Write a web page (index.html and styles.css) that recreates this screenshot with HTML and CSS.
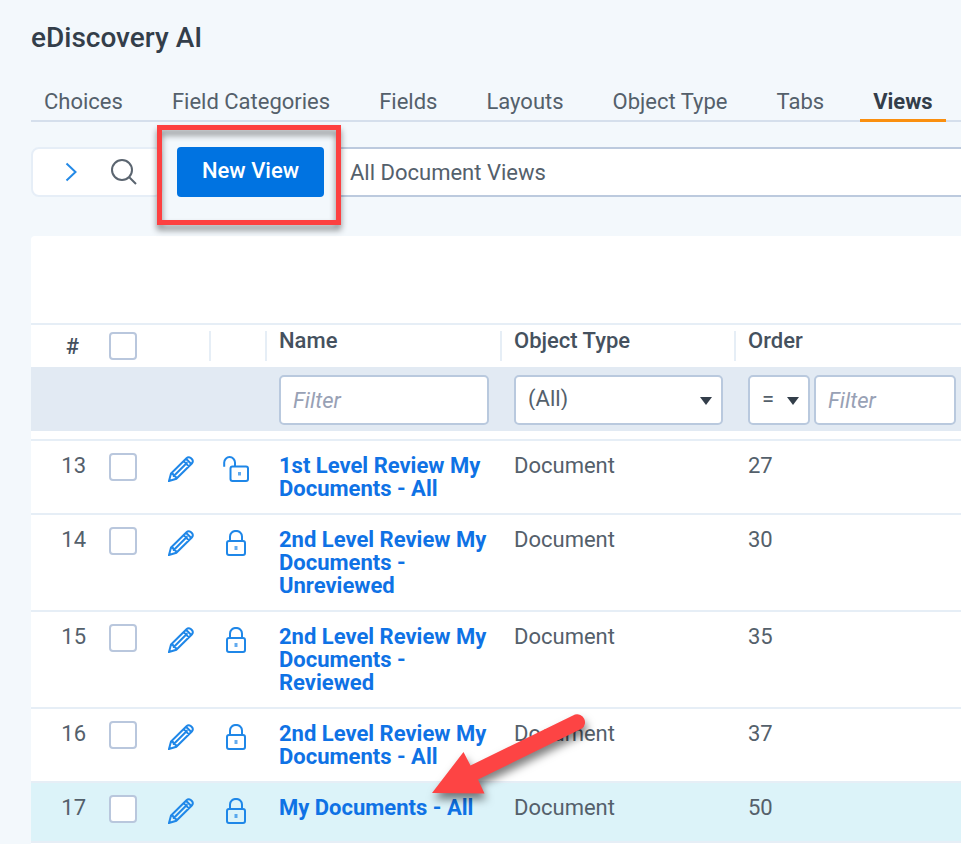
FILE: index.html
```html
<!DOCTYPE html>
<html lang="en">
<head>
  <meta charset="UTF-8">
  <meta name="viewport" content="width=device-width, initial-scale=1.0">
  <title>eDiscovery AI - Views</title>
  <link rel="stylesheet" href="styles.css">
</head>
<body>
  <!-- Shared icons -->
  <svg class="sprite" aria-hidden="true">
    <symbol id="icon-pencil" viewBox="0 0 26 26">
      <path d="M1 25 L3 17.5 L18.5 2.2 Q20.5 0.3 22.8 2 L24 3.2 Q25.7 5.4 23.8 7.5 L8.3 22.8 Z M3 17.5 Q5.5 17.3 5.8 20 Q8.5 20.2 8.3 22.8 M5.8 20 L19.5 6.3 M15.6 5.1 L20.9 10.4 M18 2.8 L23.3 8"/>
    </symbol>
    <symbol id="icon-lock" viewBox="0 0 26 26">
      <rect x="4" y="11" width="18" height="14" rx="2"/>
      <path d="M7 11 V6.5 A6 5.6 0 0 1 19 6.5 V11"/>
      <path class="keyhole" d="M13 16 V20"/>
    </symbol>
    <symbol id="icon-unlock" viewBox="0 0 26 26">
      <rect x="7.5" y="10.5" width="17.5" height="14.5" rx="2"/>
      <path d="M1.2 10.8 V6.5 A5.4 5.4 0 0 1 12 6.5 V10.5"/>
      <path class="keyhole" d="M16.5 16 V19.5"/>
    </symbol>
  </svg>

  <h1>eDiscovery AI</h1>

  <nav class="tabs">
    <a href="#choices">Choices</a>
    <a href="#field-categories">Field Categories</a>
    <a href="#fields">Fields</a>
    <a href="#layouts">Layouts</a>
    <a href="#object-type">Object Type</a>
    <a href="#tabs">Tabs</a>
    <a href="#views" class="active" aria-current="page">Views</a>
  </nav>

  <div class="toolbar">
    <div class="tools">
      <button type="button" class="tool" aria-label="Expand">
        <svg width="12" height="20" viewBox="0 0 12 20"><path class="chevron" d="M1.5 1.5 L10.5 10 L1.5 18.5"/></svg>
      </button>
      <button type="button" class="tool" aria-label="Search">
        <svg width="26" height="26" viewBox="0 0 26 26"><path class="glass" d="M18 18 L25 25 M21 11 A10 10 0 1 1 1 11 A10 10 0 1 1 21 11"/></svg>
      </button>
    </div>
    <div class="new-view">
      <button type="button">New View</button>
    </div>
    <select class="view-select" aria-label="View">
      <option>All Document Views</option>
    </select>
  </div>

  <main class="panel">
    <table>
      <colgroup>
        <col class="col-num">
        <col class="col-check">
        <col class="col-edit">
        <col class="col-lock">
        <col class="col-name">
        <col class="col-type">
        <col>
      </colgroup>
      <thead>
        <tr class="heads">
          <th class="num">#</th>
          <th><input type="checkbox" aria-label="Select all"></th>
          <th></th>
          <th><span class="divider"></span></th>
          <th><span class="divider">Name</span></th>
          <th><span class="divider">Object Type</span></th>
          <th><span class="divider">Order</span></th>
        </tr>
        <tr class="filters">
          <td colspan="4"></td>
          <td><input type="text" placeholder="Filter" aria-label="Filter by name"></td>
          <td>
            <div class="select">
              <select aria-label="Filter by object type"><option>(All)</option></select>
            </div>
          </td>
          <td class="order-filter">
            <div class="filter-group">
              <div class="select operator">
                <select aria-label="Order operator"><option>=</option></select>
              </div>
              <input type="text" placeholder="Filter" aria-label="Filter by order">
            </div>
          </td>
        </tr>
      </thead>
      <tbody>
        <tr>
          <td class="num">13</td>
          <td><input type="checkbox" aria-label="Select row 13"></td>
          <td><button type="button" class="icon" aria-label="Edit"><svg><use href="#icon-pencil"/></svg></button></td>
          <td><button type="button" class="icon" aria-label="Unlocked"><svg><use href="#icon-unlock"/></svg></button></td>
          <td><a href="#13">1st Level Review My Documents - All</a></td>
          <td>Document</td>
          <td>27</td>
        </tr>
        <tr>
          <td class="num">14</td>
          <td><input type="checkbox" aria-label="Select row 14"></td>
          <td><button type="button" class="icon" aria-label="Edit"><svg><use href="#icon-pencil"/></svg></button></td>
          <td><button type="button" class="icon" aria-label="Locked"><svg><use href="#icon-lock"/></svg></button></td>
          <td><a href="#14">2nd Level Review My Documents - Unreviewed</a></td>
          <td>Document</td>
          <td>30</td>
        </tr>
        <tr>
          <td class="num">15</td>
          <td><input type="checkbox" aria-label="Select row 15"></td>
          <td><button type="button" class="icon" aria-label="Edit"><svg><use href="#icon-pencil"/></svg></button></td>
          <td><button type="button" class="icon" aria-label="Locked"><svg><use href="#icon-lock"/></svg></button></td>
          <td><a href="#15">2nd Level Review My Documents - Reviewed</a></td>
          <td>Document</td>
          <td>35</td>
        </tr>
        <tr>
          <td class="num">16</td>
          <td><input type="checkbox" aria-label="Select row 16"></td>
          <td><button type="button" class="icon" aria-label="Edit"><svg><use href="#icon-pencil"/></svg></button></td>
          <td><button type="button" class="icon" aria-label="Locked"><svg><use href="#icon-lock"/></svg></button></td>
          <td><a href="#16">2nd Level Review My Documents - All</a></td>
          <td>Document</td>
          <td>37</td>
        </tr>
        <tr class="current">
          <td class="num">17</td>
          <td><input type="checkbox" aria-label="Select row 17"></td>
          <td><button type="button" class="icon" aria-label="Edit"><svg><use href="#icon-pencil"/></svg></button></td>
          <td><button type="button" class="icon" aria-label="Locked"><svg><use href="#icon-lock"/></svg></button></td>
          <td class="pointed">
            <a href="#17">My Documents - All</a>
            <svg class="arrow" width="170" height="105" viewBox="0 0 170 105" aria-hidden="true">
              <path d="M6 87 L37.500 46 L44.500 59.500 L149 8.500 A8 8 0 0 1 156 22.500 L52 73.500 L58.500 87.500 Z"/>
            </svg>
          </td>
          <td>Document</td>
          <td>50</td>
        </tr>
      </tbody>
    </table>
  </main>
</body>
</html>
```

FILE: styles.css
```css
* {
  box-sizing: border-box;
}
body {
  margin: 0;
  padding-left: 31px;
  min-height: 100vh;
  display: flex;
  flex-direction: column;
  overflow-x: hidden;
  background: #f3f8fc;
  color: #54606b;
  font-family: Roboto, "Liberation Sans", sans-serif;
  font-size: 22px;
  line-height: 23px;
}
button, input, select {
  font: inherit;
  color: inherit;
  margin: 0;
}
button {
  border: none;
  background: none;
  padding: 0;
  cursor: pointer;
}
.sprite {
  position: absolute;
  width: 0;
  height: 0;
}
h1 {
  margin: 21px 0 0;
  font-size: 28px;
  line-height: 34px;
  font-weight: 500;
  color: #333e4a;
}

/* Tabs */
.tabs {
  display: flex;
  gap: 23px;
  margin-top: 23px;
  height: 44px;
  border-bottom: 2px solid #d5dfec;
}
.tabs a {
  height: 44px;
  padding: 12px 13px 0;
  color: #54606b;
  text-decoration: none;
  white-space: nowrap;
}
.tabs .active {
  color: #333e4a;
  font-weight: 700;
  border-bottom: 3px solid #fa8f0f;
}

/* Toolbar */
.toolbar {
  display: flex;
  height: 50px;
  margin-top: 25px;
}
.tools {
  display: flex;
  align-items: center;
  width: 132px;
  padding-left: 32px;
  gap: 34px;
  background: #fff;
  border: 2px solid #e6eef7;
  border-radius: 8px;
}
.tool {
  display: flex;
}
.tool svg {
  fill: none;
  stroke-width: 2;
}
.chevron {
  stroke: #2389e6;
}
.glass {
  stroke: #5b6570;
}
.new-view {
  position: relative;
  margin: 0 13px 0 14px;
}
.new-view button {
  height: 50px;
  width: 147px;
  padding-bottom: 3px;
  border-radius: 4px;
  background: #0073e1;
  color: #fff;
  font-weight: 500;
}
/* Callout frame round the button */
.new-view::after {
  content: "";
  position: absolute;
  inset: -22px -17px -28px -20px;
  border: 5px solid #fd4040;
  filter: drop-shadow(0 5px 3px rgba(0, 0, 0, 0.45));
  pointer-events: none;
}
.view-select {
  flex: 1;
  appearance: none;
  padding: 0 11px;
  background: #fff;
  border: 2px solid #bccade;
  border-right: none;
}

/* Grid */
.panel {
  flex: 1;
  margin-top: 39px;
  padding-top: 87px;
  background: #fff;
  border-top-left-radius: 4px;
}
table {
  width: 100%;
  table-layout: fixed;
  border-collapse: separate;
  border-spacing: 0;
}
.col-num {
  width: 64px;
}
.col-check {
  width: 59px;
}
.col-edit {
  width: 55px;
}
.col-lock {
  width: 56px;
}
.col-name {
  width: 235px;
}
.col-type {
  width: 234px;
}
th, td {
  padding: 0 11px 0 14px;
  text-align: left;
  vertical-align: top;
}
.heads th {
  height: 44px;
  border-top: 2px solid #e6eef6;
  color: #45515e;
  font-weight: 500;
}
.heads .num {
  padding: 10px 16px 0 0;
}
.divider {
  display: block;
  height: 30px;
  margin: 6px 0 0 -14px;
  padding-left: 12px;
  border-left: 2px solid #e6eef6;
  line-height: 20px;
}
th input[type="checkbox"] {
  margin-top: 7px;
}
.num {
  padding-right: 9px;
  text-align: right;
}
.filters td {
  height: 64px;
  padding-top: 8px;
  background: #e2eaf3;
}
.filters .order-filter {
  padding-right: 5px;
}
input[type="text"],
.select select {
  display: block;
  width: 100%;
  height: 50px;
  padding: 0 12px;
  appearance: none;
  background: #fff;
  border: 2px solid #b9c9de;
  border-radius: 5px;
}
.select select {
  padding-bottom: 3px;
}
::placeholder {
  color: #98a1b5;
  font-style: italic;
}
.select {
  position: relative;
}
.select::after {
  content: "";
  position: absolute;
  top: 22px;
  right: 11px;
  border: 6px solid transparent;
  border-top: 8px solid #333e4a;
  border-bottom: none;
  pointer-events: none;
}
.filter-group {
  display: flex;
  gap: 4px;
}
.operator {
  flex: none;
  width: 62px;
}
input[type="checkbox"] {
  display: block;
  width: 28px;
  height: 28px;
  appearance: none;
  background: #fff;
  border: 2px solid #b9c7dd;
  border-radius: 4px;
}

/* Rows */
tbody::before {
  content: "";
  display: block;
  height: 8px;
}
tbody td {
  height: 60px;
  padding-top: 13px;
  padding-bottom: 13px;
  border-top: 2px solid #e6eef6;
}
tbody tr:last-child td {
  border-bottom: 2px solid #e6eef6;
}
tbody input[type="checkbox"] {
  margin-top: -1px;
}
td a {
  color: #0f72e5;
  font-weight: 700;
  text-decoration: none;
}
.icon {
  display: block;
  margin-top: 2px;
}
.icon svg {
  display: block;
  width: 26px;
  height: 26px;
  fill: none;
  stroke: #1f87e8;
  stroke-width: 2;
}
.keyhole {
  stroke-width: 3;
  opacity: 0.7;
}
.current td {
  height: 62px;
  background: #dcf3f9;
}
.pointed {
  position: relative;
}
.arrow {
  position: absolute;
  left: 161px;
  top: -77px;
  overflow: visible;
  fill: #fd4444;
  filter: drop-shadow(2px 6px 4px rgba(0, 0, 0, 0.5));
  pointer-events: none;
}
```
